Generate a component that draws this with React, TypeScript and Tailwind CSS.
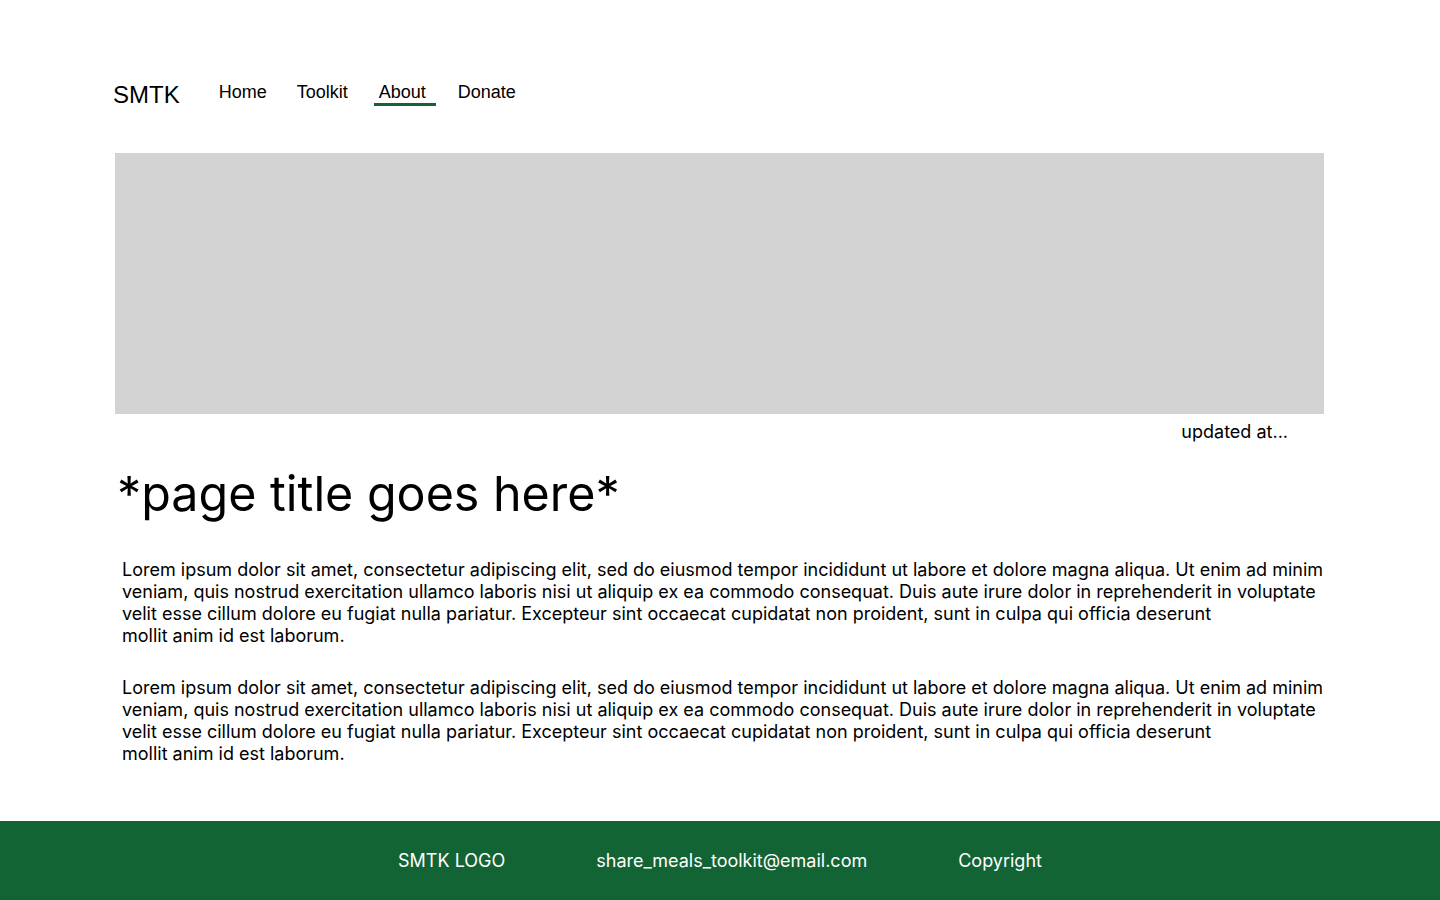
import React from 'react';

const lorem = [
  'Lorem ipsum dolor sit amet, consectetur adipiscing elit, sed do eiusmod tempor incididunt ut labore et dolore magna aliqua. Ut enim ad minim',
  'veniam, quis nostrud exercitation ullamco laboris nisi ut aliquip ex ea commodo consequat. Duis aute irure dolor in reprehenderit in voluptate',
  'velit esse cillum dolore eu fugiat nulla pariatur. Excepteur sint occaecat cupidatat non proident, sunt in culpa qui officia deserunt',
  'mollit anim id est laborum.',
];

export default function App() {
  return (
    <div className="min-h-screen bg-white text-black font-['Inter',sans-serif] flex flex-col">
      {/* Header */}
      <header className="flex items-start pt-[80px] pl-[113px] font-['Liberation_Sans',Arial,sans-serif]">
        <span className="text-[24px] leading-[30px]">SMTK</span>
        <nav className="flex items-start mt-[2px] text-[18px] leading-[21px]">
          <a className="ml-[39px]">Home</a>
          <a className="ml-[30px]">Toolkit</a>
          <a className="ml-[26px] pl-[5px] pr-[10px] border-b-[3px] border-[#136434]">About</a>
          <a className="ml-[22px]">Donate</a>
        </nav>
      </header>

      {/* Main */}
      <main className="flex-1 pl-[115px] pr-[116px] pt-[43px]">
        <div className="h-[261px] bg-[#d3d3d3]" />
        <div className="flex justify-end pr-[36px] pt-[6px]">
          <span className="text-[18px] leading-[24px]">updated at...</span>
        </div>

        <h1 className="mt-[20px] pl-[2px] text-[48.4px] leading-[60px]">*page title goes here*</h1>

        <div className="mt-[35px] pl-[7px] text-[18px] leading-[22px] flex flex-col gap-[30px]">
          {[0, 1].map((p) => (
            <p key={p}>
              {lorem.map((line, i) => (
                <span key={i} className="block whitespace-nowrap">
                  {line}
                </span>
              ))}
            </p>
          ))}
        </div>
      </main>

      {/* Footer */}
      <footer className="mt-[56px] h-[79px] bg-[#126435] text-white flex items-center justify-center gap-[91px] text-[18px]">
        <span>SMTK LOGO</span>
        <span>share_meals_toolkit@email.com</span>
        <span>Copyright</span>
      </footer>
    </div>
  );
}
